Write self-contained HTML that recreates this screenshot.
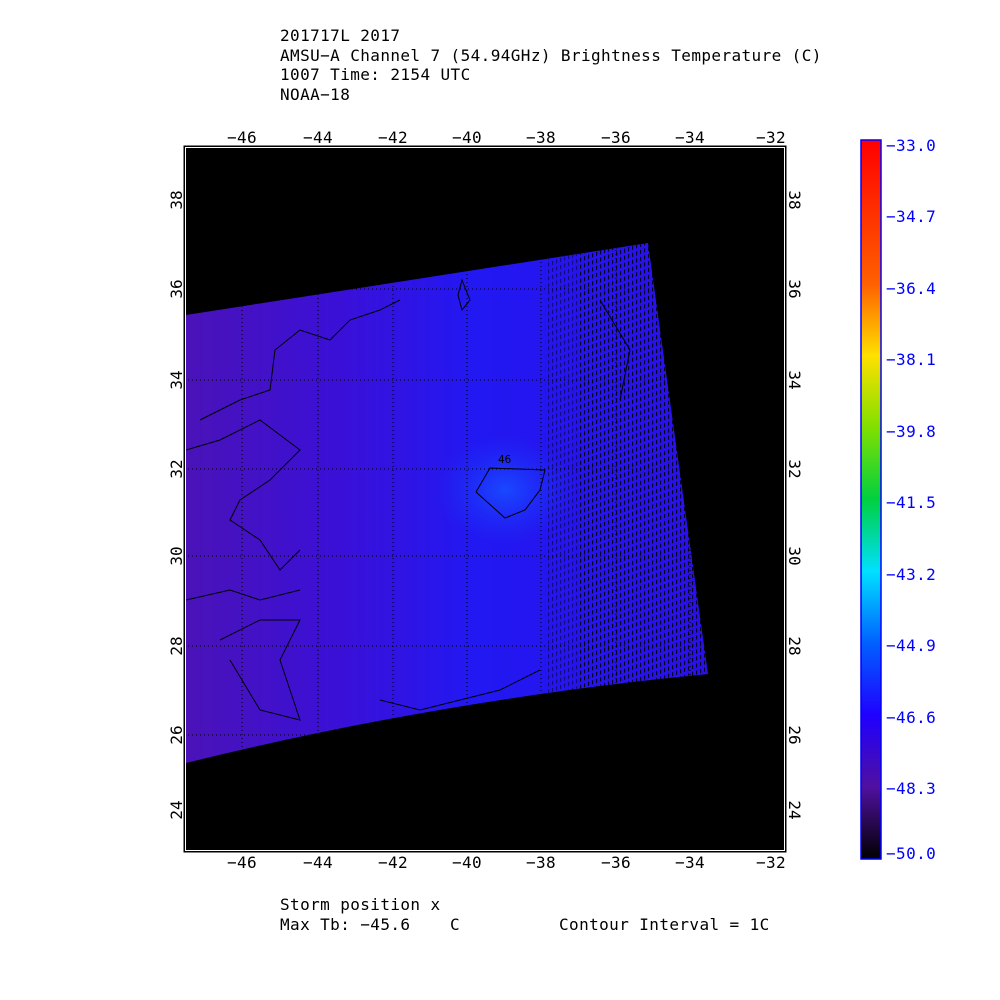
<!DOCTYPE html>
<html><head><style>
html,body{margin:0;padding:0;background:#fff;}
svg{display:block;font-family:"DejaVu Sans Mono","Liberation Mono",monospace;}
</style></head><body>
<svg width="1000" height="1000" viewBox="0 0 1000 1000" xmlns="http://www.w3.org/2000/svg">
<defs>
<linearGradient id="sw" x1="0" y1="0" x2="1" y2="0">
<stop offset="0" stop-color="#4a12b8"/>
<stop offset="0.3" stop-color="#3a10d8"/>
<stop offset="0.55" stop-color="#2218f2"/>
<stop offset="1" stop-color="#2a10e8"/>
</linearGradient>
<radialGradient id="eye" cx="0.5" cy="0.5" r="0.5">
<stop offset="0" stop-color="#1a48ff"/>
<stop offset="1" stop-color="#1a30f8" stop-opacity="0"/>
</radialGradient>
<pattern id="hatch" width="4" height="7" patternUnits="userSpaceOnUse" patternTransform="skewY(-20)">
<rect x="0" y="0" width="1" height="4" fill="#000"/>
</pattern>
<clipPath id="swc"><path d="M186,315 L648,243 L708,674 Q440,700 186,763 Z"/></clipPath>
<linearGradient id="cb" x1="0" y1="0" x2="0" y2="1">
<stop offset="0" stop-color="#ff0000"/>
<stop offset="0.2" stop-color="#ff6000"/>
<stop offset="0.3" stop-color="#ffe000"/>
<stop offset="0.4" stop-color="#80e000"/>
<stop offset="0.5" stop-color="#00d040"/>
<stop offset="0.6" stop-color="#00e0ff"/>
<stop offset="0.7" stop-color="#0060ff"/>
<stop offset="0.8" stop-color="#2000ff"/>
<stop offset="0.9" stop-color="#5010a0"/>
<stop offset="1" stop-color="#000"/>
</linearGradient>
</defs>
<g font-size="16" fill="#000" letter-spacing="0.4">
<text x="280" y="41">201717L 2017</text>
<text x="280" y="61">AMSU−A Channel 7 (54.94GHz) Brightness Temperature (C)</text>
<text x="280" y="80">1007 Time: 2154 UTC</text>
<text x="280" y="100">NOAA−18</text>
</g>
<rect x="184" y="146" width="602" height="706" fill="#000" stroke="#000" stroke-width="1"/>
<rect x="185.5" y="147.5" width="599" height="703" fill="none" stroke="#fff" stroke-width="1"/>
<path d="M186,315 L648,243 L708,674 Q440,700 186,763 Z" fill="url(#sw)"/>
<g clip-path="url(#swc)">
<ellipse cx="505" cy="490" rx="70" ry="55" fill="url(#eye)"/>
<rect x="545" y="240" width="180" height="480" fill="url(#hatch)" opacity="0.5"/>
<rect x="580" y="240" width="140" height="480" fill="url(#hatch)" opacity="0.75"/>
<g stroke="#000" stroke-width="1" stroke-dasharray="1,3" fill="none">
<path d="M242,146V852M318,146V852M393,146V852M467,146V852M541,146V852M616,146V852M690,146V852"/>
<path d="M184,200H786M184,289H786M184,380H786M184,469H786M184,556H786M184,646H786M184,735H786M184,810H786"/>
</g>
<g stroke="#000" stroke-width="1" fill="none">
<path d="M476,492 L490,468 L545,470 L540,490 L525,510 L505,518 L476,492"/>
<path d="M200,420 L240,400 L270,390 L275,350 L300,330 L330,340 L350,320 L380,310 L400,300"/>
<path d="M186,450 L220,440 L260,420 L300,450 L270,480 L240,500 L230,520 L260,540 L280,570 L300,550"/>
<path d="M220,640 L260,620 L300,620 L280,660 L300,720 L260,710 L230,660"/>
<path d="M186,600 L230,590 L260,600 L300,590"/>
<path d="M462,280 L470,300 L462,310 L458,295 Z"/>
<path d="M380,700 L420,710 L460,700 L500,690 L540,670"/>
<path d="M600,300 L630,350 L620,400"/>
</g>
<text x="498" y="463" font-size="11" fill="#000">46</text>
</g>
<g font-size="16" fill="#000" letter-spacing="0.4">
<text x="242" y="143" text-anchor="middle">−46</text>
<text x="318" y="143" text-anchor="middle">−44</text>
<text x="393" y="143" text-anchor="middle">−42</text>
<text x="467" y="143" text-anchor="middle">−40</text>
<text x="541" y="143" text-anchor="middle">−38</text>
<text x="616" y="143" text-anchor="middle">−36</text>
<text x="690" y="143" text-anchor="middle">−34</text>
<text x="771" y="143" text-anchor="middle">−32</text>
<text x="242" y="868" text-anchor="middle">−46</text>
<text x="318" y="868" text-anchor="middle">−44</text>
<text x="393" y="868" text-anchor="middle">−42</text>
<text x="467" y="868" text-anchor="middle">−40</text>
<text x="541" y="868" text-anchor="middle">−38</text>
<text x="616" y="868" text-anchor="middle">−36</text>
<text x="690" y="868" text-anchor="middle">−34</text>
<text x="771" y="868" text-anchor="middle">−32</text>
</g>
<g font-size="16" fill="#000">
<g transform="translate(182,200) rotate(-90)"><text text-anchor="middle">38</text></g>
<g transform="translate(182,289) rotate(-90)"><text text-anchor="middle">36</text></g>
<g transform="translate(182,380) rotate(-90)"><text text-anchor="middle">34</text></g>
<g transform="translate(182,469) rotate(-90)"><text text-anchor="middle">32</text></g>
<g transform="translate(182,556) rotate(-90)"><text text-anchor="middle">30</text></g>
<g transform="translate(182,646) rotate(-90)"><text text-anchor="middle">28</text></g>
<g transform="translate(182,735) rotate(-90)"><text text-anchor="middle">26</text></g>
<g transform="translate(182,810) rotate(-90)"><text text-anchor="middle">24</text></g>
<g transform="translate(789,200) rotate(90)"><text text-anchor="middle">38</text></g>
<g transform="translate(789,289) rotate(90)"><text text-anchor="middle">36</text></g>
<g transform="translate(789,380) rotate(90)"><text text-anchor="middle">34</text></g>
<g transform="translate(789,469) rotate(90)"><text text-anchor="middle">32</text></g>
<g transform="translate(789,556) rotate(90)"><text text-anchor="middle">30</text></g>
<g transform="translate(789,646) rotate(90)"><text text-anchor="middle">28</text></g>
<g transform="translate(789,735) rotate(90)"><text text-anchor="middle">26</text></g>
<g transform="translate(789,810) rotate(90)"><text text-anchor="middle">24</text></g>
</g>
<rect x="861" y="140" width="20" height="719" fill="url(#cb)" stroke="#0000ff" stroke-width="1.5"/>
<g font-size="16" fill="#0000ff" letter-spacing="0.4">
<text x="886" y="151">−33.0</text>
<text x="886" y="222">−34.7</text>
<text x="886" y="294">−36.4</text>
<text x="886" y="365">−38.1</text>
<text x="886" y="437">−39.8</text>
<text x="886" y="508">−41.5</text>
<text x="886" y="580">−43.2</text>
<text x="886" y="651">−44.9</text>
<text x="886" y="723">−46.6</text>
<text x="886" y="794">−48.3</text>
<text x="886" y="859">−50.0</text>
</g>
<g font-size="16" fill="#000" letter-spacing="0.4">
<text x="280" y="910">Storm position x</text>
<text x="280" y="930">Max Tb: −45.6</text>
<text x="450" y="930">C</text>
<text x="559" y="930">Contour Interval = 1C</text>
</g>
</svg>
</body></html>
